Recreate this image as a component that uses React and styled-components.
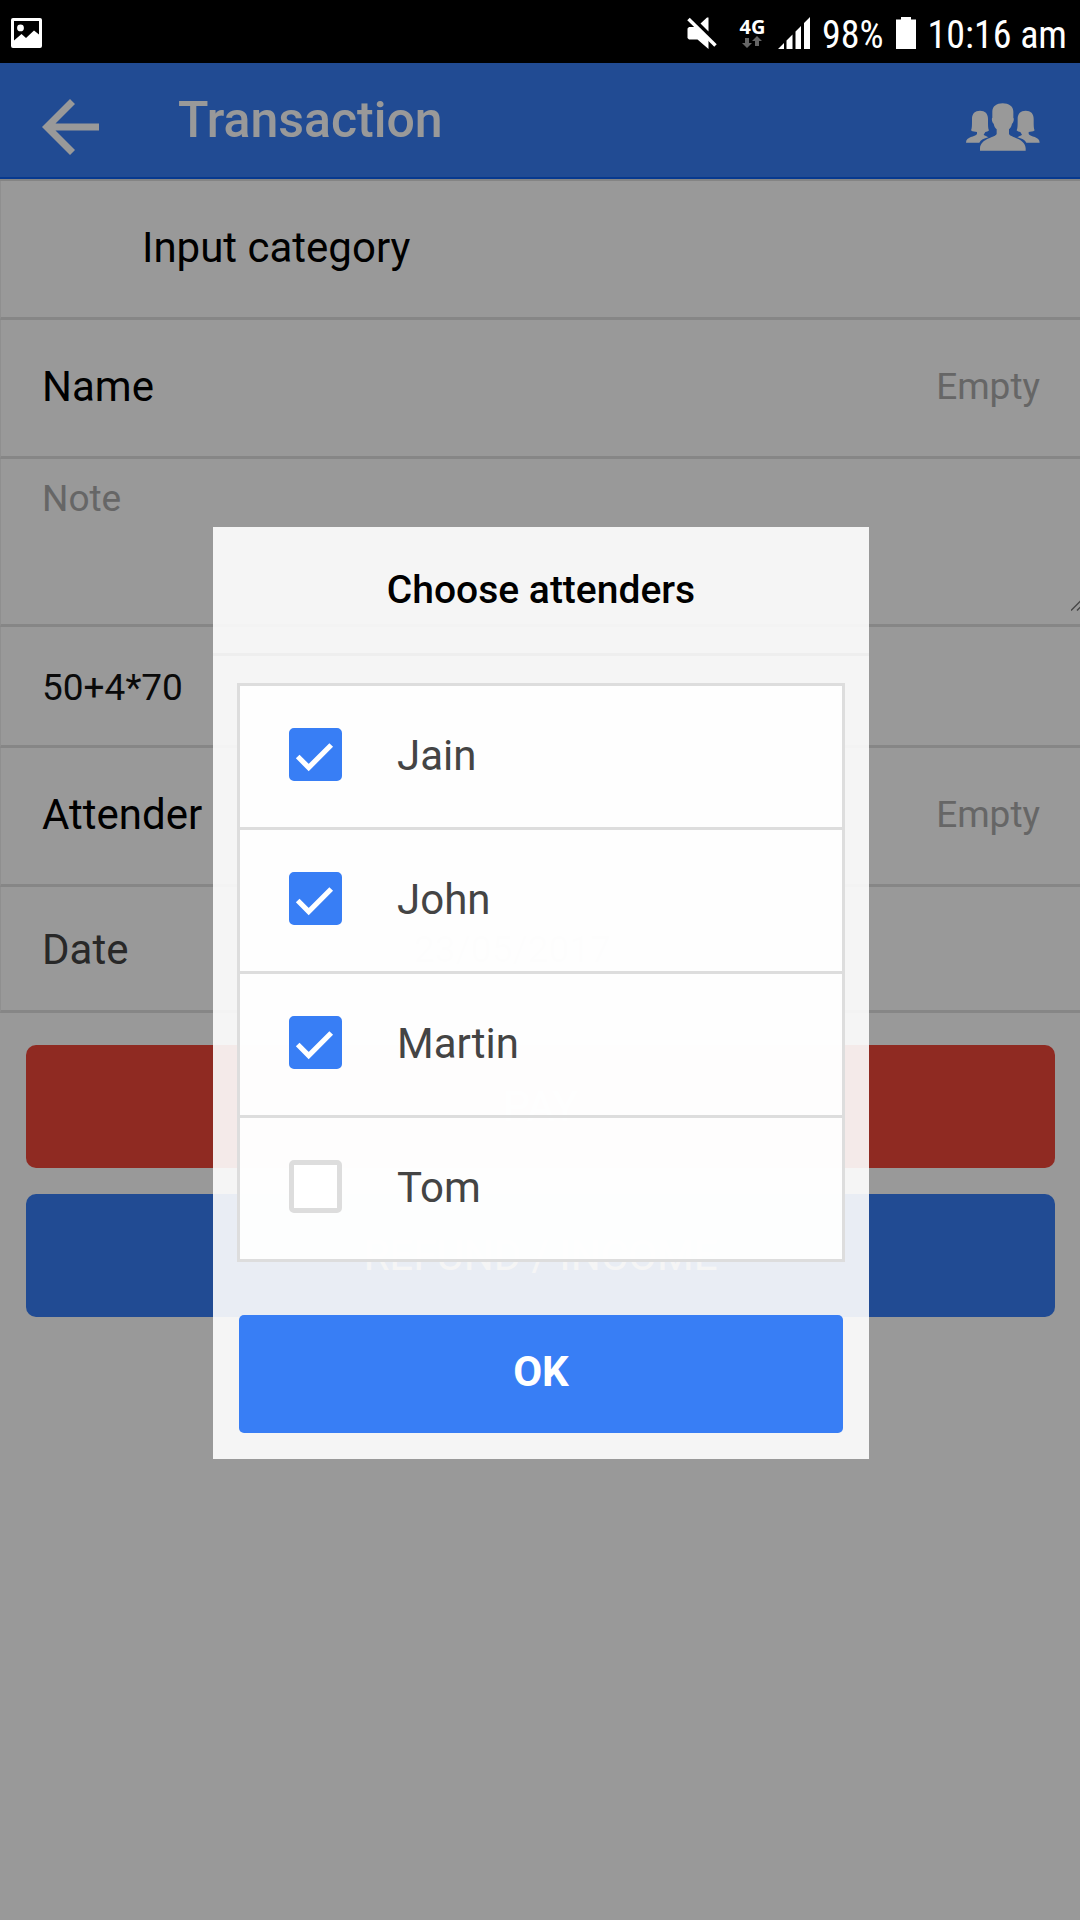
import React, { useState } from "react";
import styled, { createGlobalStyle } from "styled-components";

const GlobalStyle = createGlobalStyle`
  *, *::before, *::after { box-sizing: border-box; }
  body { margin: 0; background: #fff; font-family: Roboto, "Liberation Sans", sans-serif; }
  button, input, textarea { font: inherit; margin: 0; }
`;

const Screen = styled.div`
  display: flex;
  flex-direction: column;
  min-height: 100vh;
`;

const StatusBar = styled.div`
  display: flex;
  align-items: center;
  justify-content: space-between;
  height: 63px;
  padding: 3px 13px 0 11px;
  background: #000;
  color: #fff;
`;

const StatusText = styled.span`
  padding-top: 3px;
  font-family: "Roboto Condensed", "Liberation Sans Narrow", Roboto, sans-serif;
  font-size: 38px;
  line-height: 46px;
`;

const StatusGroup = styled.div`
  display: flex;
  align-items: center;
  gap: ${(p) => p.$gap || 0}px;
`;

const NetworkType = styled.div`
  display: flex;
  flex-direction: column;
  align-items: center;
  width: 27px;
  font-family: "Noto Sans", sans-serif;
  font-size: 20px;
  font-weight: 700;
  line-height: 18px;
`;

const View = styled.div`
  position: relative;
  display: flex;
  flex-direction: column;
  flex: 1;
`;

const Header = styled.header`
  display: flex;
  align-items: center;
  height: 116px;
  padding: 0 40px 0 42px;
  background: #387ef5;
  border-bottom: 2px solid #0c60ee;
  color: #fff;
`;

const Title = styled.h1`
  flex: 1;
  margin: 0;
  padding-left: 79px;
  font-size: 50px;
  font-weight: 500;
  line-height: 114px;
`;

const IconButton = styled.button`
  display: flex;
  align-items: center;
  padding: 13px 0 0;
  border: 0;
  background: none;
  color: inherit;
`;

const Form = styled.form`
  display: flex;
  flex-direction: column;
  border-top: 2px solid #ddd;
`;

const Row = styled.div`
  display: flex;
  align-items: center;
  position: relative;
  min-height: ${(p) => p.$height || 139}px;
  padding: ${(p) => (p.$low ? "3px 40px 0" : "0 40px 2px")};
  padding-left: ${(p) => p.$indent || 41}px;
  border-bottom: 3px solid #dfdfdf;
  border-left: 1px solid #eee;
`;

const Label = styled.label`
  width: ${(p) => p.$width || "auto"};
  color: ${(p) => p.$color || "#000"};
  font-size: 42px;
  line-height: 50px;
`;

const Field = styled.input`
  flex: 1;
  min-width: 0;
  padding: 0;
  border: 0;
  outline: 0;
  background: none;
  color: ${(p) => p.$color || "#111"};
  font-size: ${(p) => p.$size || 37}px;
  line-height: 50px;
  text-align: ${(p) => p.$align || "left"};
  &::placeholder { color: #aaa; opacity: 1; }
`;

const NoteRow = styled(Row)`
  padding: 0;
`;

const Note = styled.textarea`
  flex: 1;
  align-self: stretch;
  padding: 13px 41px;
  border: 0;
  outline: 0;
  resize: none;
  background: none;
  color: #111;
  font-size: 37px;
  line-height: 54px;
  &::placeholder { color: #aaa; opacity: 1; }
`;

const Grip = styled.svg`
  position: absolute;
  right: 0;
  bottom: 13px;
`;

const Actions = styled.div`
  display: flex;
  flex-direction: column;
  gap: 26px;
  padding: 32px 25px 0 26px;
`;

const ActionButton = styled.button`
  height: 123px;
  border: 0;
  border-radius: 10px;
  background: ${(p) => p.$color};
  color: #fff;
  font-size: 42px;
`;

const Backdrop = styled.div`
  position: absolute;
  inset: 0;
  display: flex;
  align-items: center;
  justify-content: center;
  padding: 3px 0 0 2px;
  background: rgba(0, 0, 0, 0.4);
`;

const Popup = styled.section`
  display: flex;
  flex-direction: column;
  width: 656px;
  max-width: 100%;
  background: rgba(255, 255, 255, 0.9);
`;

const PopupTitle = styled.h2`
  margin: 0;
  padding: 39px 26px;
  border-bottom: 3px solid #eee;
  color: #000;
  font-size: 39px;
  font-weight: 500;
  line-height: 48px;
  text-align: center;
`;

const PopupBody = styled.div`
  display: flex;
  flex-direction: column;
  padding: 27px 24px 0;
`;

const List = styled.ul`
  margin: 0;
  padding: 0;
  list-style: none;
  border: 3px solid #ddd;
  background: rgba(255, 255, 255, 0.9);
`;

const Option = styled.li`
  & + & { border-top: 3px solid #ddd; }
`;

const OptionLabel = styled.label`
  display: flex;
  align-items: center;
  gap: 55px;
  height: 141px;
  padding: 0 26px 2px 49px;
  color: #444;
  font-size: 42px;
  line-height: 50px;
`;

const Tick = styled.span`
  display: grid;
  padding-bottom: 3px;
  > * { grid-area: 1 / 1; }
  svg { pointer-events: none; }
`;

const TickBox = styled.input`
  appearance: none;
  width: 53px;
  height: 53px;
  border: 5px solid #ddd;
  border-radius: 5px;
  background: #fff;
  &:checked { border-color: #387ef5; background: #387ef5; }
`;

const PopupFooter = styled.div`
  display: flex;
  padding: 53px 26px 26px;
`;

const OkButton = styled.button`
  flex: 1;
  height: 118px;
  padding: 0 0 6px;
  border: 0;
  border-radius: 5px;
  background: #387ef5;
  color: #fff;
  font-size: 42px;
  font-weight: 700;
`;

const PictureIcon = () => (
  <svg width="31" height="30" viewBox="0 0 31 30">
    <path
      fill="#fff"
      fillRule="evenodd"
      d="M2 0h27a2 2 0 0 1 2 2v26a2 2 0 0 1-2 2H2a2 2 0 0 1-2-2V2a2 2 0 0 1 2-2zM3 3v19.500l7.500-6.500 4.500 4 8-7.500 5 4V3zM9.500 6.500a3.400 3.400 0 1 1 0 6.800 3.400 3.400 0 0 1 0-6.800z"
    />
  </svg>
);

const MuteIcon = () => (
  <svg width="30" height="32" viewBox="0 0 30 32">
    <path fill="#fff" d="M.5 11.500L2 10h6l13.500 12v10L10.500 22.500H2L.5 21zM13.500 6.500L20 .5h1.500v14z" />
    <path stroke="#fff" strokeWidth="3.500" d="M1.500 2l27 26.500" />
  </svg>
);

const DataArrows = () => (
  <svg width="20" height="12" viewBox="0 0 20 12">
    <path fill="#666" d="M3 2h4v5h3l-5 5-5-5h3zM13 10h4V5h3l-5-5-5 5h3z" />
  </svg>
);

const SignalIcon = () => (
  <svg width="32" height="32" viewBox="0 0 32 32">
    <path fill="#fff" d="M0 32l6-6v6zM8.500 23.500l6-6V32h-6zM17.500 14.500l5.500-5.500V32h-5.500zM26 6l6-6v32h-6z" />
  </svg>
);

const BatteryIcon = () => (
  <svg width="20" height="32" viewBox="0 0 20 32">
    <path fill="#fff" d="M5 0h10v2.500h5V32H0V2.500h5z" />
  </svg>
);

const BackIcon = () => (
  <svg width="57" height="56" viewBox="0 0 57 56">
    <path fill="#fff" d="M28 0l5 5-19.500 19.500H57v7H13.500L33 51l-5 5L0 28z" />
  </svg>
);

const WOMAN =
  "M60 45C45 45 36 53 36 70C36 90 36 98 33 104C38 109 46 108 51 109V115C46 124 18 122 18 141H58C62 133 72 128 85 125C82 121 74 121 71 117L76 109C80 108 84 108 87 104C84 98 84 90 84 70C84 53 75 45 60 45Z";

const PeopleIcon = () => (
  <svg width="74" height="48" viewBox="18 22 222 144">
    <g fill="#fff">
      <path d={WOMAN} />
      <path d={WOMAN} transform="translate(257 0) scale(-1 1)" />
      <path d="M128 23C110 23 97 32 97 48V66C94 68 96 80 101 84C103 94 107 98 110 101V114C108 126 62 126 60 158V165H197V158C195 126 149 126 147 114V101C150 98 154 94 156 84C161 80 163 68 160 66V48C160 32 146 23 128 23Z" />
    </g>
  </svg>
);

const people = ["Jain", "John", "Martin", "Tom"];

export default function App() {
  const [chosen, setChosen] = useState(["Jain", "John", "Martin"]);
  const toggle = (name) =>
    setChosen((c) => (c.includes(name) ? c.filter((n) => n !== name) : [...c, name]));

  return (
    <Screen>
      <GlobalStyle />
      <StatusBar>
        <PictureIcon />
        <StatusGroup $gap={12}>
          <StatusGroup $gap={22}>
            <MuteIcon />
            <NetworkType>
              4G
              <DataArrows />
            </NetworkType>
          </StatusGroup>
          <SignalIcon />
          <StatusText>98%</StatusText>
          <BatteryIcon />
          <StatusText>10:16 am</StatusText>
        </StatusGroup>
      </StatusBar>
      <View>
        <Header>
          <IconButton type="button" aria-label="Back">
            <BackIcon />
          </IconButton>
          <Title>Transaction</Title>
          <IconButton type="button" aria-label="Attenders">
            <PeopleIcon />
          </IconButton>
        </Header>
        <Form onSubmit={(e) => e.preventDefault()}>
          <Row $indent={141}>
            <Label as="span">Input category</Label>
          </Row>
          <Row>
            <Label htmlFor="name">Name</Label>
            <Field id="name" placeholder="Empty" $align="right" />
          </Row>
          <NoteRow $height={168}>
            <Note aria-label="Note" placeholder="Note" />
            <Grip width="9" height="11" viewBox="0 0 9 11">
              <path d="M0 10.500L10 .5M6 10.500l6-6" stroke="#777" strokeWidth="1.500" />
            </Grip>
          </NoteRow>
          <Row $height={121} $low>
            <Field aria-label="Amount" defaultValue="50+4*70" />
          </Row>
          <Row>
            <Label htmlFor="attender">Attender</Label>
            <Field id="attender" placeholder="Empty" $align="right" />
          </Row>
          <Row $height={126} $low>
            <Label htmlFor="date" $color="#444" $width="372px">Date</Label>
            <Field id="date" defaultValue="23/05/2017" $color="#444" />
          </Row>
          <Actions>
            <ActionButton type="button" $color="#ef473a">PAY</ActionButton>
            <ActionButton type="button" $color="#387ef5">REFUND / INCOME</ActionButton>
          </Actions>
        </Form>
        <Backdrop>
          <Popup role="dialog" aria-labelledby="popup-title">
            <PopupTitle id="popup-title">Choose attenders</PopupTitle>
            <PopupBody>
              <List>
                {people.map((name) => (
                  <Option key={name}>
                    <OptionLabel>
                      <Tick>
                        <TickBox
                          type="checkbox"
                          checked={chosen.includes(name)}
                          onChange={() => toggle(name)}
                        />
                        {chosen.includes(name) && (
                          <svg width="53" height="53" viewBox="0 0 53 53">
                            <path d="M8.700 28.500l11 11 22.500-22.500" fill="none" stroke="#fff" strokeWidth="5.200" />
                          </svg>
                        )}
                      </Tick>
                      {name}
                    </OptionLabel>
                  </Option>
                ))}
              </List>
            </PopupBody>
            <PopupFooter>
              <OkButton type="button">OK</OkButton>
            </PopupFooter>
          </Popup>
        </Backdrop>
      </View>
    </Screen>
  );
}
